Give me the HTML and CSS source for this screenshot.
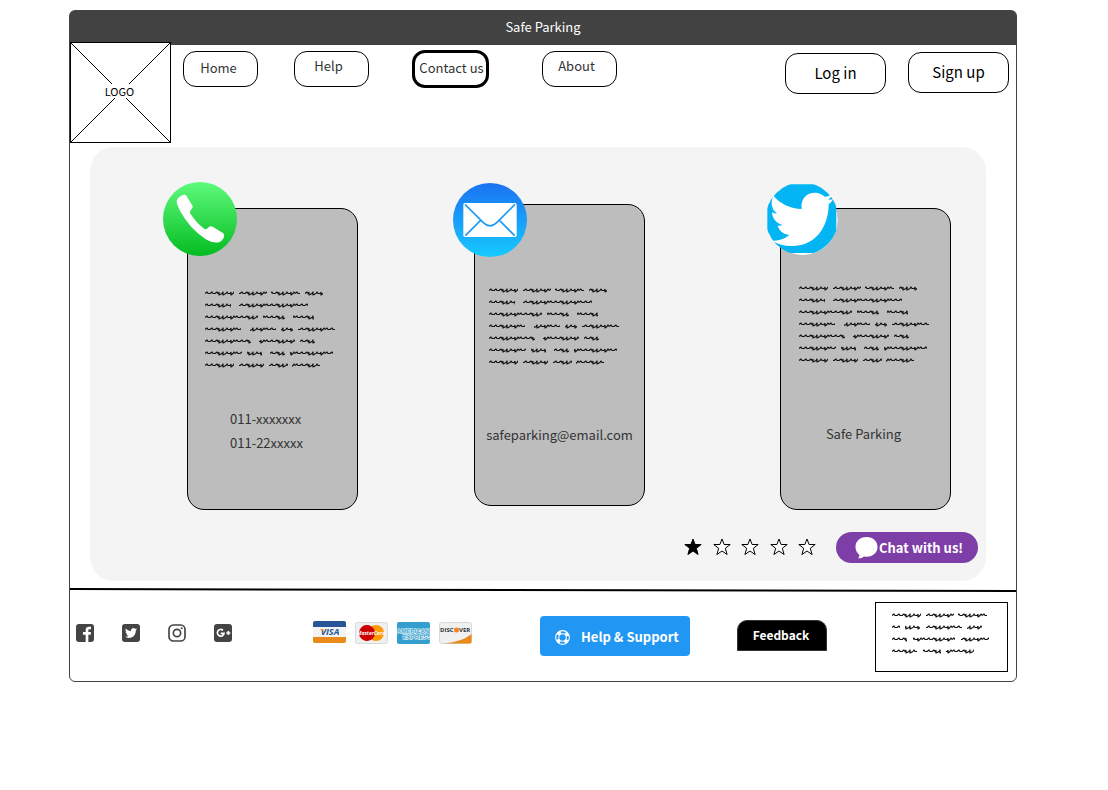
FILE: index.html
```html
<!DOCTYPE html>
<html lang="en">
<head>
<meta charset="utf-8">
<title>Safe Parking</title>
<link rel="stylesheet" href="styles.css">
</head>
<body>
<svg class="defs" width="0" height="0" aria-hidden="true">
  <defs>
    <pattern id="squiggle" width="30" height="12" patternUnits="userSpaceOnUse">
      <path d="M0 6.500L2 5L3 6.500H5L7 5L8 6.500H10L12 5L13 6.500L14 5.500V8L17 6.500L18 5V8L21 6.500L22 5L23 6.500H25L26 5.500V8L28 6.500L29 5L30 6.500" fill="none" stroke="#111" stroke-width="1.200" stroke-linejoin="round"/>
    </pattern>
    <symbol id="paragraph" viewBox="0 0 131 84">
      <g fill="url(#squiggle)">
        <path d="M0 0h29v12H0zM34 0h28v12H34zM66 0h29v12H66zM100 0h18v12h-18z"/>
        <path d="M0 12h26v12H0zM34 12h69v12H34z"/>
        <path d="M0 24h53v12H0zM58 24h22v12H58zM88 24h21v12H88z"/>
        <path d="M0 36h36v12H0zM45 36h26v12H45zM76 36h12v12H76zM93 36h37v12H93z"/>
        <path d="M0 48h46v12H0zM54 48h36v12H54zM95 48h15v12H95z"/>
        <path d="M0 60h37v12H0zM42 60h15v12H42zM65 60h15v12H65zM85 60h43v12H85z"/>
        <path d="M0 72h29v12H0zM34 72h25v12H34zM64 72h19v12H64zM87 72h28v12H87z"/>
      </g>
    </symbol>
    <symbol id="star" viewBox="0 0 18 18">
      <path d="M9 1l2.100 5.500h6.100l-4.900 3.800 1.800 6.200L9 13l-5.100 3.500 1.800-6.200L.8 6.500h6.100z" stroke="#000" stroke-width="1"/>
    </symbol>
    <symbol id="bird" viewBox="0 0 24 24">
      <path d="M23.953 4.57a10 10 0 01-2.825.775 4.958 4.958 0 002.163-2.723c-.951.555-2.005.959-3.127 1.184a4.92 4.92 0 00-8.384 4.482C7.69 8.095 4.067 6.13 1.64 3.162a4.822 4.822 0 00-.666 2.475c0 1.71.87 3.213 2.188 4.096a4.904 4.904 0 01-2.228-.616v.06a4.923 4.923 0 003.946 4.827 4.996 4.996 0 01-2.212.085 4.936 4.936 0 004.604 3.417 9.867 9.867 0 01-6.102 2.105c-.39 0-.779-.023-1.17-.067a13.995 13.995 0 007.557 2.209c9.053 0 13.998-7.496 13.998-13.985 0-.21 0-.42-.015-.63A9.935 9.935 0 0024 4.59z"/>
    </symbol>
  </defs>
</svg>

<div class="window">
  <div class="titlebar">Safe Parking</div>

  <header class="header">
    <div class="logo">
      <svg viewBox="0 0 99 99" preserveAspectRatio="none" aria-hidden="true"><path d="M0 0l99 99M99 0L0 99" stroke="#000" fill="none"/></svg>
      <span>LOGO</span>
    </div>
    <nav class="nav">
      <button class="pill home">Home</button>
      <button class="pill raised">Help</button>
      <button class="pill current" aria-current="page">Contact us</button>
      <button class="pill raised">About</button>
    </nav>
    <div class="account">
      <button class="pill large">Log in</button>
      <button class="pill large signup">Sign up</button>
    </div>
  </header>

  <main class="panel">
    <div class="cards">
      <section class="card phone">
        <svg class="badge" viewBox="0 0 222 222" role="img" aria-label="Phone">
          <defs><linearGradient id="green" x2="0" y2="1"><stop offset="0" stop-color="#5ffa7c"/><stop offset="1" stop-color="#04bc22"/></linearGradient></defs>
          <circle cx="111" cy="111" r="111" fill="url(#green)"/>
          <path fill="#fff" d="M69 40L89 72Q90 76 85 82Q80 88 81 93Q98 120 118 136Q124 142 127 142Q131 142 135 137Q143 131 149 134L181 154Q185 158 182 168Q176 178 168 181Q150 184 126 170Q80 140 52 88Q40 65 41 56Q45 44 60 39Q66 37 69 40Z"/>
        </svg>
        <svg class="copy" aria-hidden="true"><use href="#paragraph"/></svg>
        <p>011-xxxxxxx<br>011-22xxxxx</p>
      </section>

      <section class="card mail">
        <svg class="badge" viewBox="0 0 222 222" role="img" aria-label="Email">
          <defs><linearGradient id="blue" x2="0" y2="1"><stop offset="0" stop-color="#1b72f2"/><stop offset="1" stop-color="#16caff"/></linearGradient></defs>
          <circle cx="111" cy="111" r="111" fill="url(#blue)"/>
          <rect x="31" y="60" width="160" height="102" rx="5" fill="#fff"/>
          <path d="M36 64L91 119Q111 139 131 119L186 64M37 158L82 113M185 158L140 113" fill="none" stroke="#1d9bf5" stroke-width="5"/>
        </svg>
        <svg class="copy" aria-hidden="true"><use href="#paragraph"/></svg>
        <p>safeparking@email.com</p>
      </section>

      <section class="card twitter">
        <svg class="badge" viewBox="0 0 216 216" role="img" aria-label="Twitter">
          <defs><clipPath id="round"><circle cx="105" cy="104" r="109"/></clipPath></defs>
          <circle cx="107" cy="108" r="105" fill="#fff"/>
          <rect x="1" y="1" width="207" height="206" rx="8" fill="#03b5f3" clip-path="url(#round)"/>
          <path fill="#fff" d="M19 35C42 61 69 73 104 75C100 45 118 26 143 26C157 26 166 31 173 38Q183 38 194 32Q191 42 184 47Q190 48 198 46Q193 56 185 61C186 114 156 184 80 186C55 187 34 182 17 170Q43 172 67 153C48 150 37 140 32 125Q40 126 47 123C27 118 16 103 15 85Q22 89 30 88C13 76 10 55 19 35Z"/>
        </svg>
        <svg class="copy" aria-hidden="true"><use href="#paragraph"/></svg>
        <p>Safe Parking</p>
      </section>
    </div>

    <div class="actions">
      <div class="rating" role="group" aria-label="Rating">
        <button class="star on" aria-label="1 star"><svg><use href="#star"/></svg></button>
        <button class="star" aria-label="2 stars"><svg><use href="#star"/></svg></button>
        <button class="star" aria-label="3 stars"><svg><use href="#star"/></svg></button>
        <button class="star" aria-label="4 stars"><svg><use href="#star"/></svg></button>
        <button class="star" aria-label="5 stars"><svg><use href="#star"/></svg></button>
      </div>
      <button class="chat">
        <svg viewBox="0 0 24 22" aria-hidden="true"><path d="M12 0C5 0 1 4.500 1 10c0 3.500 1.500 6 4 8-.2 1.300-.6 2.300-1.500 3.500 3 0 4.500-.7 6-2 8 1.400 13.500-3.500 13.500-9.500C23 4.500 19 0 12 0z" fill="#fff"/></svg>
        Chat with us!
      </button>
    </div>
  </main>

  <svg class="divider" viewBox="0 0 946 4" preserveAspectRatio="none" aria-hidden="true"><path d="M0 1l946 2" stroke="#000" stroke-width="2"/></svg>

  <footer class="footer">
    <div class="social">
      <a href="#" aria-label="Facebook"><svg viewBox="0 0 54 54"><rect width="54" height="54" rx="9" fill="#444"/><path d="M29 54V32h-8v-8h8v-6c0-7 4-10 10-10h6v8h-4c-3 0-4 1-4 4v4h8l-1 8h-7v22z" fill="#fff"/></svg></a>
      <a href="#" aria-label="Twitter"><svg viewBox="0 0 54 54"><rect width="54" height="54" rx="9" fill="#444"/><use href="#bird" x="9" y="9" width="36" height="36" fill="#fff"/></svg></a>
      <a href="#" aria-label="Instagram"><svg viewBox="0 0 54 54" fill="none" stroke="#444" stroke-width="5"><rect x="3" y="3" width="48" height="48" rx="13"/><circle cx="27" cy="27" r="11"/><circle cx="41" cy="13" r="3" fill="#444" stroke="none"/></svg></a>
      <a href="#" aria-label="Google Plus"><svg viewBox="0 0 54 54"><rect width="54" height="54" rx="9" fill="#444"/><path d="M27 19a10 10 0 1 0 3 9H20M37 27h12M43 21v12" fill="none" stroke="#fff" stroke-width="5"/></svg></a>
    </div>

    <div class="payments">
      <svg viewBox="0 0 33 22" role="img" aria-label="Visa"><rect width="33" height="22" rx="2" fill="#f3f3f3"/><path d="M0 6V2q0-2 2-2h29q2 0 2 2v4z" fill="#265697"/><path d="M0 16h33v4q0 2-2 2H2q-2 0-2-2z" fill="#e98a1b"/><text class="visa" x="17" y="14" text-anchor="middle">VISA</text><path d="M7 8h3l1 3z" fill="#e98a1b"/></svg>
      <svg class="low" viewBox="0 0 33 22" role="img" aria-label="MasterCard"><rect x=".5" y=".5" width="32" height="21" rx="2" fill="#f0f0f0" stroke="#d9d9d9"/><circle cx="21" cy="11" r="8" fill="#f90"/><path d="M16.500 4.400a8 8 0 1 0 0 13.200a8 8 0 0 0 0-13.200z" fill="#c00"/><text class="master" x="16" y="13" text-anchor="middle">MasterCard</text></svg>
      <svg class="low" viewBox="0 0 33 22" role="img" aria-label="American Express"><rect width="33" height="22" rx="2" fill="#349fce"/><text class="amex" x="16" y="11" text-anchor="middle">AMERICAN</text><text class="amex" x="20" y="17" text-anchor="middle">EXPRESS</text></svg>
      <svg class="low" viewBox="0 0 33 22" role="img" aria-label="Discover"><rect x=".5" y=".5" width="32" height="21" rx="2" fill="#f0f0f0" stroke="#d9d9d9"/><path d="M5 21.500Q23 20 32.500 12v8q0 1.500-2 1.500z" fill="#e98a1b"/><text class="discover" x="1" y="10">DISC</text><circle cx="17.500" cy="8" r="2.500" fill="#f58220"/><text class="discover" x="20" y="10">VER</text></svg>
    </div>

    <button class="help">
      <svg viewBox="0 0 14 14" fill="none" stroke="#fff" aria-hidden="true"><circle cx="7" cy="7" r="6.400" stroke-width="1"/><circle cx="7" cy="7" r="3.500" stroke-width="1"/><circle cx="7" cy="7" r="5" stroke-width="3" stroke-dasharray="3.400 4.454" stroke-dashoffset="-2.200"/></svg>
      Help &amp; Support
    </button>
    <button class="feedback">Feedback</button>

    <div class="note">
      <svg viewBox="0 0 98 48" aria-hidden="true"><g fill="url(#squiggle)">
        <path d="M0 0h29v12H0zM34 0h28v12H34zM66 0h29v12H66z"/>
        <path d="M0 12h8v12H0zM13 12h15v12H13zM34 12h36v12H34zM75 12h15v12H75z"/>
        <path d="M0 24h15v12H0zM21 24h42v12H21zM69 24h28v12H69z"/>
        <path d="M0 36h25v12H0zM31 36h18v12H31zM54 36h28v12H54z"/>
      </g></svg>
    </div>
  </footer>
</div>
</body>
</html>
```
FILE: styles.css
```css
* { box-sizing: border-box; }

body {
  margin: 0;
  padding: 10px 91px 10px 69px;
  background: #fff;
  color: #333;
  font: 13px/24px "Noto Sans CJK SC", "Noto Sans", sans-serif;
}

button { font: inherit; color: inherit; cursor: pointer; }
svg { display: block; }
.defs { position: absolute; }

.window {
  border: 1px solid #424242;
  border-radius: 6px;
}

.titlebar {
  height: 34px;
  padding-top: 4px;
  border-radius: 4px 4px 0 0;
  background: #424242;
  color: #fff;
  text-align: center;
}

.header {
  display: flex;
  align-items: flex-start;
  padding-right: 7px;
}

.logo {
  display: grid;
  place-items: center;
  width: 101px;
  height: 101px;
  margin-top: -3px;
  border: 1px solid #000;
  background: #fff;
  color: #000;
  font-size: 11px;
  line-height: 14px;
}
.logo > * { grid-area: 1 / 1; }
.logo svg { width: 100%; height: 100%; }
.logo span { margin: 0 2px 4px 0; background: #fff; }

.nav {
  display: grid;
  grid-template-columns: 111px 118px 130px 75px;
  align-items: center;
  padding: 5px 0 0 12px;
}

.pill {
  width: 75px;
  height: 36px;
  padding: 0 0 2px;
  border: 1px solid #000;
  border-radius: 13px;
  background: #fff;
  line-height: 20px;
}
.home { padding-right: 4px; }
.raised { padding: 0 6px 6px 0; }
.current { width: 77px; height: 38px; padding-left: 2px; border-width: 3px; white-space: nowrap; }
.large { width: 101px; height: 41px; color: #000; font-size: 15px; }
.signup { margin-top: -1px; }

.account {
  display: flex;
  gap: 22px;
  margin-left: auto;
  padding-top: 8px;
}

.panel {
  margin: 4px 30px 0 20px;
  padding: 61px 8px 18px 97px;
  border-radius: 24px;
  background: #f4f4f4;
}

.cards {
  display: grid;
  grid-template-columns: 287fr 306fr 171px;
  margin-right: 27px;
}

.card {
  position: relative;
  width: 171px;
  height: 302px;
  border: 1px solid #000;
  border-radius: 17px;
  background: #bdbdbd;
}
.card p { margin: 0; text-align: center; }

.badge { position: absolute; width: 74px; height: 74px; }
.copy { width: 131px; height: 84px; }

.phone { padding: 78px 0 0 17px; }
.phone p { padding: 36px 0 0 25px; text-align: left; }
.phone .badge { top: -27px; left: -25px; }

.mail { margin-top: -4px; padding-top: 79px; }
.mail .copy { margin-left: 14px; }
.mail p { padding-top: 55px; }
.mail .badge { top: -22px; left: -22px; }

.twitter { padding-top: 73px; }
.twitter .copy { margin-left: 18px; }
.twitter p { padding: 56px 4px 0 0; }
.twitter .badge { top: -25px; left: -14px; width: 72px; height: 72px; }

.actions {
  display: flex;
  justify-content: flex-end;
  align-items: center;
  gap: 20px;
  margin-top: 22px;
}

.rating {
  display: flex;
  justify-content: space-between;
  width: 132px;
  padding-bottom: 2px;
}
.star { padding: 0; border: 0; background: none; fill: #fff; }
.star svg { width: 18px; height: 18px; }
.star.on { fill: #000; }

.chat {
  display: flex;
  align-items: center;
  width: 142px;
  height: 31px;
  padding: 0 0 0 18px;
  border: 0;
  border-radius: 16px;
  background: #7e3ea8;
  color: #fff;
  font-weight: 700;
  white-space: nowrap;
}
.chat svg { flex: none; width: 25px; height: 22px; }

.divider { width: 100%; height: 4px; margin-top: 7px; }

.footer {
  display: grid;
  grid-template-columns: 237fr 227fr 197fr 138fr 133px;
  align-items: center;
  padding: 10px 8px 9px 6px;
}

.social { display: flex; gap: 28px; padding-bottom: 8px; }
.social svg { width: 18px; height: 18px; }

.payments { display: flex; gap: 9px; padding-bottom: 10px; }
.payments svg { width: 33px; height: 22px; }
.payments .low { margin-top: 1px; }
.visa { font: italic 700 9px "Open Sans", sans-serif; fill: #265697; }
.master { font: italic 700 5px "Open Sans", sans-serif; fill: #fff; }
.amex { font: 700 6px "Liberation Sans", sans-serif; fill: #349fce; stroke: #fff; stroke-width: 1px; paint-order: stroke; }
.discover { font: 700 6px "Open Sans", sans-serif; fill: #333; }

.help {
  display: flex;
  align-items: center;
  gap: 11px;
  width: 150px;
  height: 40px;
  margin-bottom: 2px;
  padding: 2px 0 0 15px;
  border: 0;
  border-radius: 4px;
  background: #2196f3;
  color: #fff;
  font-weight: 700;
  white-space: nowrap;
}
.help svg { width: 15px; height: 15px; }

.feedback {
  width: 90px;
  height: 31px;
  margin-bottom: 3px;
  padding: 0 2px 2px 0;
  border: 1px solid #333;
  border-radius: 10px 10px 0 0;
  background: #000;
  color: #fff;
  font-size: 12px;
  font-weight: 700;
}

.note {
  height: 70px;
  padding: 6px 0 0 16px;
  border: 1px solid #000;
}
.note svg { width: 98px; height: 48px; }
```
